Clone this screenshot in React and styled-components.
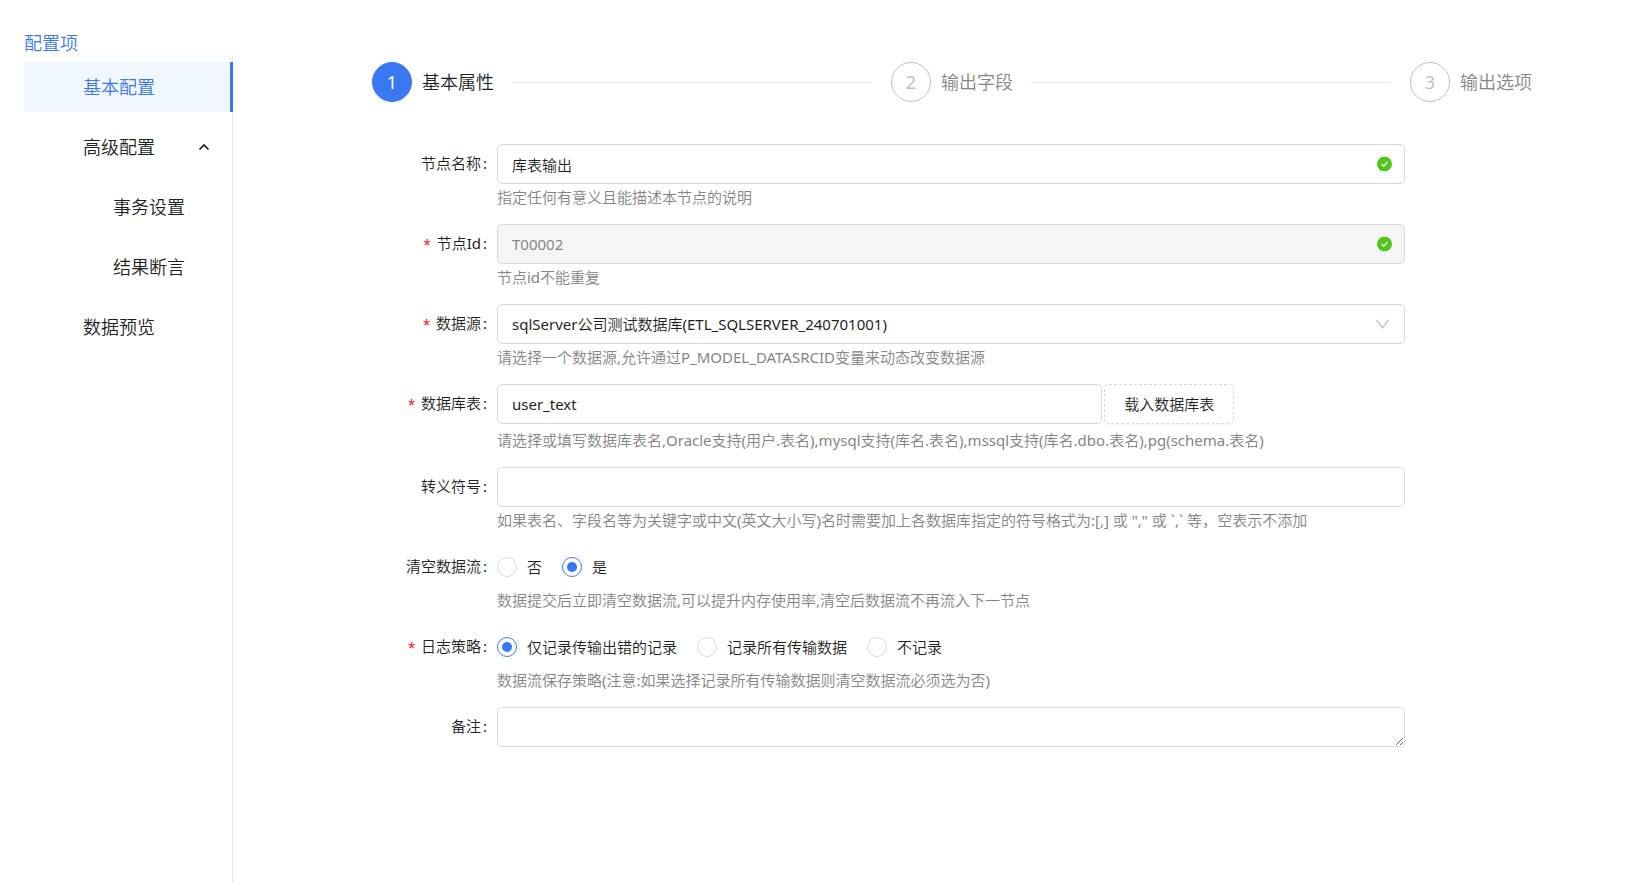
import React, { useState } from 'react';
import styled, { createGlobalStyle } from 'styled-components';

const colors = {
  primary: '#3a78f2',
  primaryLight: '#f0f7ff',
  text: '#1f1f1f',
  muted: '#858585',
  border: '#d9d9d9',
  line: '#e8e8e8',
  disabled: '#f5f5f5',
  success: '#52c41a',
  danger: '#f5222d',
};

const GlobalStyle = createGlobalStyle`
  * {
    box-sizing: border-box;
  }

  body {
    margin: 0;
    background: #ffffff;
    color: ${colors.text};
    font-family: "Noto Sans", "Noto Sans CJK SC DemiLight", "Noto Sans CJK SC", sans-serif;
    font-size: 15px;
    line-height: 24px;
  }

  input, select, textarea, button {
    font: inherit;
    color: inherit;
  }
`;

const Page = styled.div`
  display: flex;
  min-height: 100vh;
`;

const Sidebar = styled.aside`
  display: flex;
  flex-direction: column;
  flex: none;
  width: 233px;
  padding: 30px 0 0 24px;
`;

const SidebarTitle = styled.div`
  color: ${colors.primary};
  font-size: 18px;
  line-height: 27px;
`;

const Menu = styled.nav`
  display: flex;
  flex: 1;
  flex-direction: column;
  gap: 10px;
  padding-top: 5px;
  border-right: 1px solid ${colors.line};
`;

const MenuLink = styled.a`
  display: flex;
  align-items: center;
  justify-content: space-between;
  height: 50px;
  margin-right: -1px;
  padding-left: ${({ $nested }) => ($nested ? 89 : 59)}px;
  padding-right: 20px;
  border-right: 3px solid
    ${({ $active }) => ($active ? colors.primary : 'transparent')};
  background: ${({ $active }) =>
    $active ? colors.primaryLight : 'transparent'};
  background-clip: padding-box;
  color: ${({ $active }) => ($active ? colors.primary : 'inherit')};
  font-size: 18px;
  text-decoration: none;
`;

const Main = styled.main`
  flex: 1;
  min-width: 0;
  padding: 62px 110px 40px 139px;
`;

const StepList = styled.ol`
  display: flex;
  gap: 20px;
  margin: 0 0 42px;
  padding: 0;
  list-style: none;
`;

const StepItem = styled.li`
  display: flex;
  flex: 1;
  align-items: center;
  color: ${({ $active }) => ($active ? colors.text : colors.muted)};
  font-size: 18px;
  white-space: nowrap;

  &:last-child {
    flex: none;
  }

  &:not(:last-child)::after {
    content: '';
    flex: 1;
    height: 1px;
    margin-left: 18px;
    background: ${colors.line};
  }
`;

const StepNumber = styled.span`
  display: flex;
  align-items: center;
  justify-content: center;
  width: 40px;
  height: 40px;
  margin-right: 10px;
  border: 1px solid ${({ $active }) => ($active ? colors.primary : '#bfbfbf')};
  border-radius: 50%;
  background: ${({ $active }) => ($active ? colors.primary : '#ffffff')};
  color: ${({ $active }) => ($active ? '#ffffff' : '#bfbfbf')};
`;

const Form = styled.form`
  display: flex;
  flex-direction: column;
  gap: 13px;
  padding-right: 127px;
`;

const Row = styled.div`
  display: grid;
  grid-template-columns: 125px minmax(0, 1fr);
`;

const Label = styled.label`
  display: flex;
  align-items: center;
  justify-content: flex-end;
  height: 38px;
  padding-right: 10px;
  white-space: nowrap;

  &::after {
    content: ':';
    margin-left: 2px;
  }
`;

const Required = styled.span`
  margin-right: 4px;
  padding-top: 8px;
  color: ${colors.danger};
  font-family: 'Liberation Mono', monospace;
  font-size: 18px;
`;

const Control = styled.div`
  position: relative;
  display: flex;
  align-items: center;
  min-height: 40px;
`;

const Input = styled.input`
  width: 100%;
  height: 40px;
  padding: 0 14px;
  border: 1px solid ${colors.border};
  border-radius: 5px;
  outline: none;
  background: #ffffff;

  &:focus {
    border-color: ${colors.primary};
  }

  &:disabled {
    background: ${colors.disabled};
    color: ${colors.muted};
    opacity: 1;
  }
`;

const Select = styled(Input).attrs({ as: 'select' })`
  appearance: none;
`;

const TextArea = styled(Input).attrs({ as: 'textarea' })`
  display: block;
  min-height: 40px;
  padding: 7px 14px;
  resize: vertical;
`;

const InputGroup = styled.div`
  display: flex;
  gap: 2px;
  width: 100%;
  padding-bottom: 3px;

  ${Input} {
    width: calc(100% * 2 / 3);
  }
`;

const DashedButton = styled.button`
  height: 40px;
  padding: 0 19px;
  border: 1px dashed ${colors.border};
  border-radius: 5px;
  background: #ffffff;
  box-shadow: 0 2px 0 rgba(0, 0, 0, 0.02);
  cursor: pointer;
`;

const Suffix = styled.span`
  position: absolute;
  top: 50%;
  right: 13px;
  display: flex;
  transform: translateY(-50%);
  pointer-events: none;
`;

const Hint = styled.div`
  grid-column: 2;
  color: ${colors.muted};
  line-height: 27px;
`;

const RadioGroup = styled.div`
  display: flex;
  gap: 20px;
`;

const RadioLabel = styled.label`
  display: flex;
  align-items: center;
  gap: 10px;
  cursor: pointer;
`;

const Radio = styled.input.attrs({ type: 'radio' })`
  display: flex;
  align-items: center;
  justify-content: center;
  width: 20px;
  height: 20px;
  margin: 0;
  appearance: none;
  border: 1px solid ${colors.border};
  border-radius: 50%;

  &:checked {
    border-color: ${colors.primary};
  }

  &:checked::before {
    content: '';
    width: 10px;
    height: 10px;
    border-radius: 50%;
    background: ${colors.primary};
  }
`;

const CheckIcon = () => (
  <Suffix>
    <svg width="15" height="15" viewBox="0 0 15 15" aria-hidden="true">
      <circle cx="7.5" cy="7.5" r="7.5" fill={colors.success} />
      <path
        d="M4.6 7.4 6.8 9.8 10.4 5.2"
        fill="none"
        stroke="#ffffff"
        strokeWidth="1.2"
      />
    </svg>
  </Suffix>
);

const DownIcon = () => (
  <Suffix>
    <svg width="18" height="12" viewBox="0 0 18 12" aria-hidden="true">
      <path
        d="M2.5 1.8 8.5 9.8 14.5 1.8"
        fill="none"
        stroke="#bfbfbf"
        strokeWidth="1.3"
      />
    </svg>
  </Suffix>
);

const UpIcon = () => (
  <svg width="12" height="8" viewBox="0 0 12 8" aria-hidden="true">
    <path
      d="M1.5 6.5 6 2 10.5 6.5"
      fill="none"
      stroke={colors.text}
      strokeWidth="1.7"
    />
  </svg>
);

const Field = ({ id, label, required, hint, group, children }) => (
  <Row>
    <Label
      as={group ? 'span' : 'label'}
      id={group ? `${id}-label` : undefined}
      htmlFor={group ? undefined : id}
    >
      {required && <Required>*</Required>}
      {label}
    </Label>
    <Control>{children}</Control>
    {hint && <Hint>{hint}</Hint>}
  </Row>
);

const RadioField = ({ id, options, initial, ...rest }) => {
  const [value, setValue] = useState(initial);

  return (
    <Field id={id} group {...rest}>
      <RadioGroup role="radiogroup" aria-labelledby={`${id}-label`}>
        {options.map((option) => (
          <RadioLabel key={option}>
            <Radio
              name={id}
              checked={value === option}
              onChange={() => setValue(option)}
            />
            {option}
          </RadioLabel>
        ))}
      </RadioGroup>
    </Field>
  );
};

const menu = [
  { title: '基本配置', active: true },
  { title: '高级配置', open: true },
  { title: '事务设置', nested: true },
  { title: '结果断言', nested: true },
  { title: '数据预览' },
];

const steps = ['基本属性', '输出字段', '输出选项'];

const App = () => (
  <>
    <GlobalStyle />
    <Page>
      <Sidebar>
        <SidebarTitle>配置项</SidebarTitle>
        <Menu>
          {menu.map(({ title, active, nested, open }) => (
            <MenuLink key={title} href="#" $active={active} $nested={nested}>
              {title}
              {open && <UpIcon />}
            </MenuLink>
          ))}
        </Menu>
      </Sidebar>
      <Main>
        <StepList>
          {steps.map((step, index) => (
            <StepItem key={step} $active={index === 0}>
              <StepNumber $active={index === 0}>{index + 1}</StepNumber>
              {step}
            </StepItem>
          ))}
        </StepList>
        <Form>
          <Field
            id="nodeName"
            label="节点名称"
            hint="指定任何有意义且能描述本节点的说明"
          >
            <Input id="nodeName" defaultValue="库表输出" />
            <CheckIcon />
          </Field>
          <Field id="nodeId" label="节点Id" required hint="节点id不能重复">
            <Input id="nodeId" defaultValue="T00002" disabled />
            <CheckIcon />
          </Field>
          <Field
            id="dataSource"
            label="数据源"
            required
            hint="请选择一个数据源,允许通过P_MODEL_DATASRCID变量来动态改变数据源"
          >
            <Select id="dataSource">
              <option>sqlServer公司测试数据库(ETL_SQLSERVER_240701001)</option>
            </Select>
            <DownIcon />
          </Field>
          <Field
            id="tableName"
            label="数据库表"
            required
            hint="请选择或填写数据库表名,Oracle支持(用户.表名),mysql支持(库名.表名),mssql支持(库名.dbo.表名),pg(schema.表名)"
          >
            <InputGroup>
              <Input id="tableName" defaultValue="user_text" />
              <DashedButton type="button">载入数据库表</DashedButton>
            </InputGroup>
          </Field>
          <Field
            id="escape"
            label="转义符号"
            hint={
              '如果表名、字段名等为关键字或中文(英文大小写)名时需要加上各数据库指定的符号格式为:[,] 或 "," 或 `,` 等，空表示不添加'
            }
          >
            <Input id="escape" />
          </Field>
          <RadioField
            id="clearFlow"
            label="清空数据流"
            options={['否', '是']}
            initial="是"
            hint="数据提交后立即清空数据流,可以提升内存使用率,清空后数据流不再流入下一节点"
          />
          <RadioField
            id="logPolicy"
            label="日志策略"
            required
            options={['仅记录传输出错的记录', '记录所有传输数据', '不记录']}
            initial="仅记录传输出错的记录"
            hint="数据流保存策略(注意:如果选择记录所有传输数据则清空数据流必须选为否)"
          />
          <Field id="remark" label="备注">
            <TextArea id="remark" rows={1} />
          </Field>
        </Form>
      </Main>
    </Page>
  </>
);

export default App;
